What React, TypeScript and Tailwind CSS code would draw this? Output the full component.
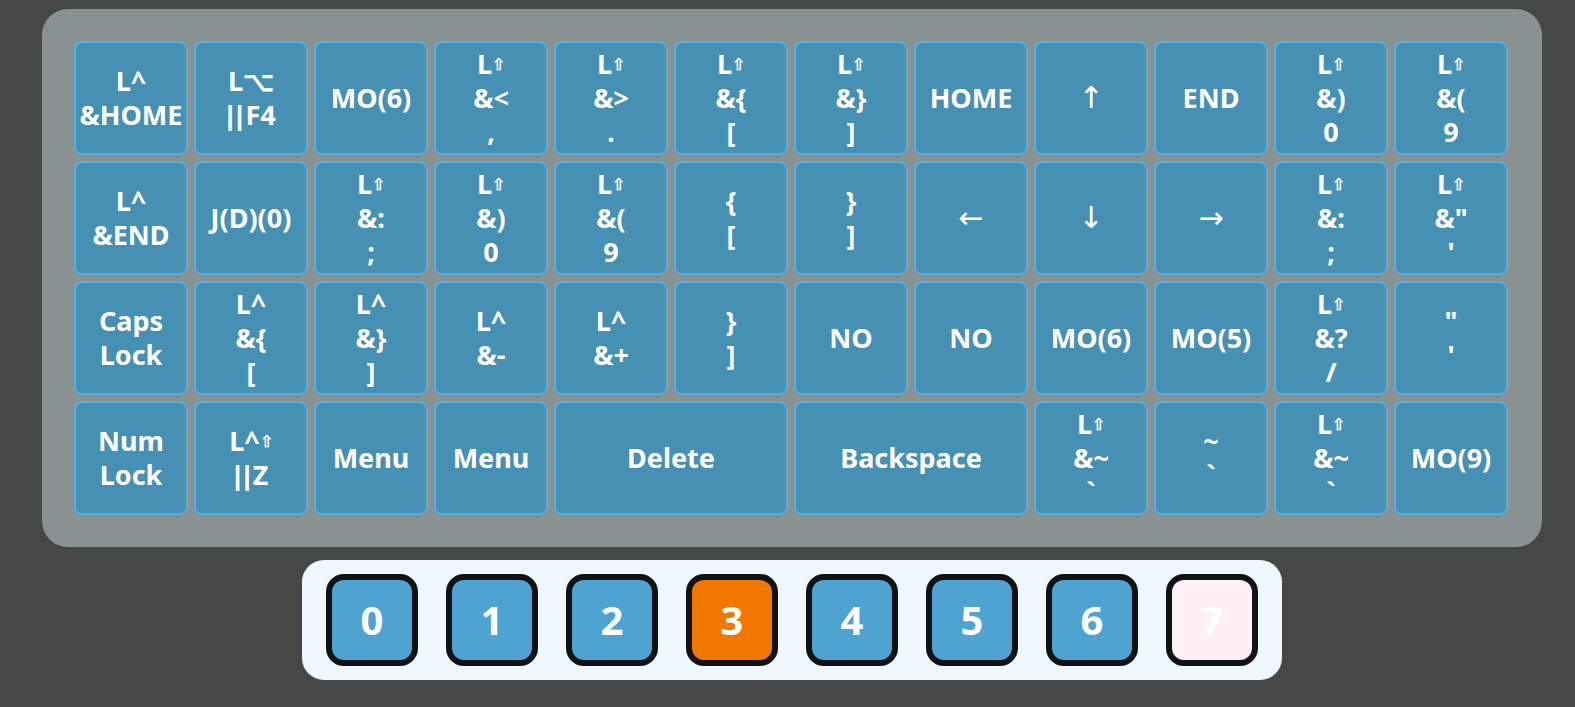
import React from 'react';

// Each key is a list of text lines; "⇧" is drawn smaller inside a line
type Key = { lines: string[]; span?: number };

const SH = '⇧';
const ARROWS = ['↑', '↓', '←', '→'];

const rows: Key[][] = [
  [
    { lines: ['L^', '&HOME'] },
    { lines: ['L⌥', '||F4'] },
    { lines: ['MO(6)'] },
    { lines: ['L' + SH, '&<', ','] },
    { lines: ['L' + SH, '&>', '.'] },
    { lines: ['L' + SH, '&{', '['] },
    { lines: ['L' + SH, '&}', ']'] },
    { lines: ['HOME'] },
    { lines: ['↑'] },
    { lines: ['END'] },
    { lines: ['L' + SH, '&)', '0'] },
    { lines: ['L' + SH, '&(', '9'] },
  ],
  [
    { lines: ['L^', '&END'] },
    { lines: ['J(D)(0)'] },
    { lines: ['L' + SH, '&:', ';'] },
    { lines: ['L' + SH, '&)', '0'] },
    { lines: ['L' + SH, '&(', '9'] },
    { lines: ['{', '['] },
    { lines: ['}', ']'] },
    { lines: ['←'] },
    { lines: ['↓'] },
    { lines: ['→'] },
    { lines: ['L' + SH, '&:', ';'] },
    { lines: ['L' + SH, '&"', "'"] },
  ],
  [
    { lines: ['Caps', 'Lock'] },
    { lines: ['L^', '&{', '['] },
    { lines: ['L^', '&}', ']'] },
    { lines: ['L^', '&-'] },
    { lines: ['L^', '&+'] },
    { lines: ['}', ']'] },
    { lines: ['NO'] },
    { lines: ['NO'] },
    { lines: ['MO(6)'] },
    { lines: ['MO(5)'] },
    { lines: ['L' + SH, '&?', '/'] },
    { lines: ['"', "'"] },
  ],
  [
    { lines: ['Num', 'Lock'] },
    { lines: ['L^' + SH, '||Z'] },
    { lines: ['Menu'] },
    { lines: ['Menu'] },
    { lines: ['Delete'], span: 2 },
    { lines: ['Backspace'], span: 2 },
    { lines: ['L' + SH, '&~', '`'] },
    { lines: ['~', '`'] },
    { lines: ['L' + SH, '&~', '`'] },
    { lines: ['MO(9)'] },
  ],
];

const layers = [0, 1, 2, 3, 4, 5, 6, 7];
const activeLayer = 3;

function Line({ text }: { text: string }) {
  if (ARROWS.includes(text)) {
    return <div className="font-['DejaVu_Sans',sans-serif] text-[30px] font-normal">{text}</div>;
  }
  if (text.startsWith('||')) {
    return (
      <div className="whitespace-nowrap">
        <span className="font-['Liberation_Sans',sans-serif] tracking-[2px]">||</span>
        <span>{text.slice(2)}</span>
      </div>
    );
  }
  const parts = text.split(SH);
  return (
    <div className="whitespace-nowrap">
      {parts.map((p, i) => (
        <React.Fragment key={i}>
          {p}
          {i < parts.length - 1 && <span className="text-[16px] align-[4px]">{SH}</span>}
        </React.Fragment>
      ))}
    </div>
  );
}

function KeyCap({ k }: { k: Key }) {
  return (
    <div
      className={
        'flex flex-col items-center justify-center rounded-lg border-2 border-[#58ade0] bg-[#4690b4] text-center text-[27px] font-bold leading-[34px] text-white ' +
        (k.span === 2 ? 'col-span-2' : '')
      }
    >
      {k.lines.map((l, i) => (
        <Line key={i} text={l} />
      ))}
    </div>
  );
}

export default function App() {
  return (
    <div className="min-h-[707px] bg-[#474747] pl-[42px] pt-[9px] font-['Noto_Sans','Open_Sans',sans-serif]">
      <div className="flex w-[1500px] flex-col items-center">
        <div className="w-full rounded-[26px] bg-[#8a9191] px-8 py-8">
          <div className="grid grid-cols-[repeat(12,114px)] grid-rows-[repeat(4,114px)] gap-1.5">
            {rows.flat().map((k, i) => (
              <KeyCap key={i} k={k} />
            ))}
          </div>
        </div>

        <div className="mt-[13px] flex gap-7 rounded-[22px] bg-[#f0f8ff] px-6 py-3.5">
          {layers.map(n => {
            let bg = 'bg-[#4fa3d0]';
            if (n === activeLayer) bg = 'bg-[#f07800]';
            if (n === 7) bg = 'bg-[#fff0f5]';
            return (
              <div
                key={n}
                className={
                  'flex h-[92px] w-[92px] items-center justify-center rounded-[18px] border-[6px] border-[#111213] text-[40px] font-bold text-white ' +
                  bg
                }
              >
                {n}
              </div>
            );
          })}
        </div>
      </div>
    </div>
  );
}
